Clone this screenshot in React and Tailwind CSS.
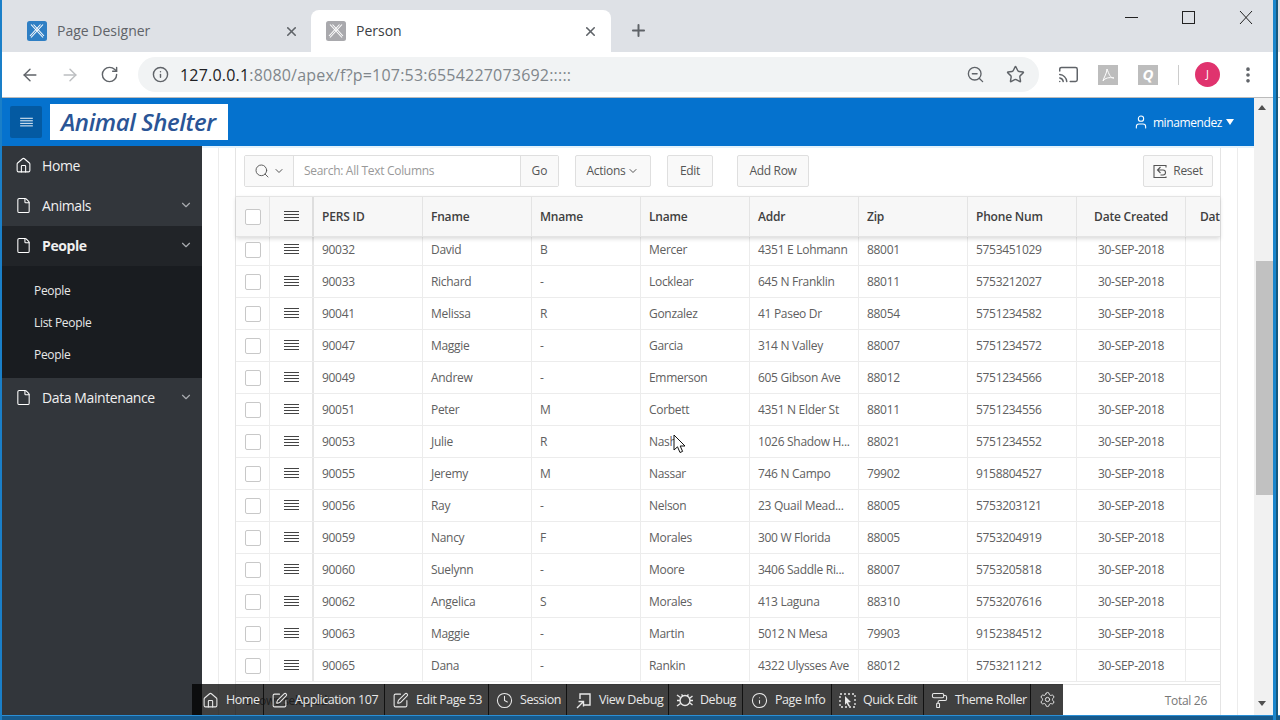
import {
  ArrowLeft, ArrowRight, RotateCw, Info, X, Plus, ZoomOut, Star, Cast, EllipsisVertical,
  House, File, ChevronDown, Search, User, Clock, SquarePen, Settings, PaintRoller,
} from 'lucide-react'

const ROWS = [
  ['90032', 'David', 'B', 'Mercer', '4351 E Lohmann', '88001', '5753451029'],
  ['90033', 'Richard', '-', 'Locklear', '645 N Franklin', '88011', '5753212027'],
  ['90041', 'Melissa', 'R', 'Gonzalez', '41 Paseo Dr', '88054', '5751234582'],
  ['90047', 'Maggie', '-', 'Garcia', '314 N Valley', '88007', '5751234572'],
  ['90049', 'Andrew', '-', 'Emmerson', '605 Gibson Ave', '88012', '5751234566'],
  ['90051', 'Peter', 'M', 'Corbett', '4351 N Elder St', '88011', '5751234556'],
  ['90053', 'Julie', 'R', 'Nash', '1026 Shadow H...', '88021', '5751234552'],
  ['90055', 'Jeremy', 'M', 'Nassar', '746 N Campo', '79902', '9158804527'],
  ['90056', 'Ray', '-', 'Nelson', '23 Quail Mead...', '88005', '5753203121'],
  ['90059', 'Nancy', 'F', 'Morales', '300 W Florida', '88005', '5753204919'],
  ['90060', 'Suelynn', '-', 'Moore', '3406 Saddle Ri...', '88007', '5753205818'],
  ['90062', 'Angelica', 'S', 'Morales', '413 Laguna', '88310', '5753207616'],
  ['90063', 'Maggie', '-', 'Martin', '5012 N Mesa', '79903', '9152384512'],
  ['90065', 'Dana', '-', 'Rankin', '4322 Ulysses Ave', '88012', '5753211212'],
]

const COLUMNS = ['PERS ID', 'Fname', 'Mname', 'Lname', 'Addr', 'Zip', 'Phone Num']
const GRID = 'grid grid-cols-[34px_42px_2px_109px_repeat(7,109px)_34px]'

function ApexLogo({ grey }) {
  return (
    <svg width="20" height="20" viewBox="0 0 20 20" className={`shrink-0 ${grey ? 'text-[#a9a9ad]' : 'text-[#2f7fc4]'}`}>
      <rect width="20" height="20" rx="2.5" fill="currentColor" />
      <path d="M4 3.5l12 13M16 3.5L4 16.5M6.5 3.5l10.5 11.5M13.5 3.5L3 15" stroke="#fff" strokeWidth="1.1" fill="none" />
    </svg>
  )
}

function Tab({ title, grey, active }) {
  return (
    <div className={`flex items-center h-[42px] pl-[15px] ${active ? 'w-[300px] pr-[13px] bg-white rounded-t-[8px]' : 'w-[299px] pr-[12px]'}`}>
      <ApexLogo grey={grey} />
      <span className={`ml-[10px] pb-[2px] flex-1 text-[14px] ${active ? 'text-[#3c4043]' : 'text-[#5f6368]'}`}>{title}</span>
      <X size={15} strokeWidth={2.5} className="text-[#5f6368]" />
    </div>
  )
}

function MenuIcon({ size = 15, className }) {
  return (
    <svg width={size} height={size - 2} viewBox="0 0 15 13" className={className} stroke="currentColor" strokeWidth="1.1">
      <path d="M0 1.5h15M0 4.5h15M0 7.5h15M0 10.5h15" />
    </svg>
  )
}

function SideItem({ icon: Icon, label, chevron, active }) {
  return (
    <div className={`flex items-center h-[40px] pb-[2px] pl-[15px] pr-[9px] ${active ? 'bg-[#212428]' : ''}`}>
      <Icon size={17} strokeWidth={1.5} className="text-white" />
      <span className={`ml-[10px] flex-1 text-[14px] tracking-[-0.4px] text-[#f0f0f0] ${active ? 'font-bold' : ''}`}>{label}</span>
      {chevron && <ChevronDown size={14} className="text-[#a8abaf]" />}
    </div>
  )
}

function ToolButton({ children, className }) {
  return (
    <div className={`flex items-center justify-center h-[32px] border border-[#dfdfdf] rounded-[2px] bg-[#f9f9f9] text-[12px] tracking-[-0.3px] text-[#555] ${className}`}>
      {children}
    </div>
  )
}

function DevItem({ icon: Icon, label, width, pad = 'pl-[7px]' }) {
  return (
    <div className={`flex items-center gap-[7px] h-full pt-[1px] border-r border-[#111] text-[12.5px] tracking-[-0.45px] text-[#e8e8e8] ${pad} ${width}`}>
      <Icon size={17} strokeWidth={1.5} className="text-[#e8e8e8] shrink-0" />
      <span className="whitespace-nowrap">{label}</span>
    </div>
  )
}

function QuickEditIcon() {
  return (
    <svg width="17" height="17" viewBox="0 0 17 17" fill="none" stroke="#e8e8e8" strokeWidth="1.3" strokeDasharray="2 2">
      <rect x="1" y="2" width="15" height="13" />
      <path d="M6 4l6 6-3 .5 2 3.5-1.5.5-2-3.5L6 13z" fill="#e8e8e8" stroke="none" />
    </svg>
  )
}

function ViewDebugIcon() {
  return (
    <svg width="17" height="17" viewBox="0 0 17 17" fill="none" stroke="#e8e8e8" strokeWidth="1.4">
      <path d="M5 7V2h10v11H9" />
      <path d="M2 16l6-6M3.5 9.5H8.5v5" />
    </svg>
  )
}

function DebugIcon() {
  return (
    <svg width="17" height="17" viewBox="0 0 17 17" fill="none" stroke="#e8e8e8" strokeWidth="1.4">
      <circle cx="9" cy="8.5" r="5" />
      <path d="M1 3l3.5 2.5M1 8.5h3M1 14l3.5-2.5M5.5 2.5L7 4M12.5 2.5L11 4M14 8.5h3M14 6l2.5-2M14 11l2.5 2" />
    </svg>
  )
}

function ResetIcon() {
  return (
    <svg width="15" height="15" viewBox="0 0 15 15" fill="none" stroke="#555" strokeWidth="1.1">
      <path d="M13 3.5V1.5H1v12h12v-1" />
      <path d="M7.5 3L4.5 6l3 3M4.5 6H10a2.5 2.5 0 010 5H7.5" />
    </svg>
  )
}

export default function App() {
  return (
    <div className="relative w-[1280px] h-[720px] overflow-hidden bg-white flex flex-col font-['Open_Sans',sans-serif]">
      {/* Browser tabs */}
      <div className="flex items-end h-[52px] pl-[12px] pr-[7px] bg-[#dee1e6] shrink-0">
        <Tab title="Page Designer" />
        <Tab title="Person" grey active />
        <Plus size={19} strokeWidth={2.5} className="ml-[18px] mb-[12px] text-[#5f6368]" />
        <div className="ml-auto self-start flex items-center gap-[44px] pt-[8px] pr-[20px] text-[#222]">
          <svg width="13" height="20" viewBox="0 0 13 20"><path d="M0 9.5h13" stroke="currentColor" /></svg>
          <svg width="13" height="20" viewBox="0 0 13 20"><rect x=".5" y="3.5" width="12" height="12" fill="none" stroke="currentColor" /></svg>
          <svg width="14" height="20" viewBox="0 0 14 20"><path d="M1 3l12 13M13 3L1 16" stroke="currentColor" fill="none" /></svg>
        </div>
      </div>

      {/* Address bar */}
      <div className="flex items-center h-[46px] pl-[2px] pr-[7px] bg-white border-b border-[#bbb] shrink-0">
        <div className="flex items-center w-[136px] pl-[18px] gap-[20px] text-[#5f6368]">
          <ArrowLeft size={20} strokeWidth={1.7} />
          <ArrowRight size={20} strokeWidth={1.7} className="text-[#bcbec1]" />
          <RotateCw size={19} strokeWidth={1.8} />
        </div>
        <div className="flex items-center w-[901px] h-[35px] pl-[14px] pr-[14px] bg-[#f1f3f4] rounded-full">
          <Info size={17} className="text-[#5f6368]" />
          <span className="ml-[11px] flex-1 text-[16px] tracking-[0.2px] text-[#80868b]"><span className="text-[#202124]">127.0.0.1</span>:8080/apex/f?p=107:53:6554227073692:::::</span>
          <ZoomOut size={19} strokeWidth={1.7} className="text-[#5f6368]" />
          <Star size={19} strokeWidth={1.8} className="ml-[21px] text-[#5f6368]" />
        </div>
        <Cast size={21} strokeWidth={1.7} className="ml-[19px] text-[#5f6368]" />
        <div className="ml-[19px] flex items-center justify-center w-[20px] h-[20px] bg-[#bdbdbd]">
          <svg width="14" height="14" viewBox="0 0 14 14"><path d="M6 1c2 5 3 9 7 9-5-1-9 0-11 3 1-4 4-8 4-12z" fill="none" stroke="#fff" /></svg>
        </div>
        <div className="ml-[20px] flex items-center justify-center w-[20px] h-[20px] bg-[#bdbdbd] text-white font-bold italic text-[15px]">Q</div>
        <div className="ml-[20px] w-px h-[20px] bg-[#ccc]" />
        <div className="ml-[16px] flex items-center justify-center w-[25px] h-[25px] rounded-full bg-[#e0336e] text-white text-[11px]">J</div>
        <EllipsisVertical size={20} strokeWidth={2.4} className="ml-[18px] text-[#5f6368]" />
      </div>

      <div className="flex flex-1 min-h-0">
        <div className="flex flex-col flex-1 min-w-0">
          {/* App header */}
          <div className="flex items-center h-[48px] pl-[10px] pr-[20px] bg-[#0572ce] shrink-0">
            <div className="flex items-center justify-center w-[32px] h-[32px] rounded-[2px] bg-[#045aa2]">
              <MenuIcon size={13} className="text-white" />
            </div>
            <div className="flex items-center ml-[8px] w-[178px] h-[36px] pl-[11px] bg-white text-[24px] font-semibold italic tracking-[-0.4px] text-[#2a5596]">Animal Shelter</div>
            <User size={16} strokeWidth={1.6} className="ml-auto text-white" />
            <span className="ml-[4px] mt-[2px] text-[12px] tracking-[-0.4px] text-white">minamendez</span>
            <span className="ml-[4px] w-0 h-0 border-x-[4px] border-x-transparent border-t-[6px] border-t-white" />
          </div>

          <div className="flex flex-1 min-h-0">
            {/* Sidebar */}
            <div className="w-[202px] shrink-0 bg-[#32363b]">
              <SideItem icon={House} label="Home" />
              <SideItem icon={File} label="Animals" chevron />
              <SideItem icon={File} label="People" chevron active />
              <div className="flex flex-col h-[112px] pt-[9px] pl-[34px] bg-[#191c20] text-[12px] tracking-[-0.3px] text-[#e8e8e8]">
                <div className="flex items-center h-[32px]">People</div>
                <div className="flex items-center h-[32px]">List People</div>
                <div className="flex items-center h-[32px]">People</div>
              </div>
              <SideItem icon={File} label="Data Maintenance" chevron />
            </div>

            {/* Content */}
            <div className="flex flex-1 min-w-0 pl-[16px] pr-[16px] bg-white border-t-2 border-[#e3f2fc]">
              <div className="flex-1 min-w-0 pl-[16px] border-x border-[#ececec]">
                <div className="flex flex-col h-full w-[986px] border-x border-[#e4e4e4]">
                  {/* Report toolbar */}
                  <div className="flex items-start h-[48px] pt-[7px] pl-[8px] pr-[7px] shrink-0">
                    <div className="flex items-center h-[32px] w-[315px] border border-[#dfdfdf] rounded-[2px]">
                      <div className="flex items-center justify-center gap-[3px] w-[49px] h-full bg-[#f9f9f9] border-r border-[#dfdfdf]">
                        <Search size={16} strokeWidth={1.4} className="text-[#555]" />
                        <ChevronDown size={12} className="text-[#555]" />
                      </div>
                      <span className="flex-1 pl-[10px] text-[12px] tracking-[-0.3px] text-[#999]">Search: All Text Columns</span>
                      <div className="flex items-center justify-center w-[38px] h-full bg-[#f9f9f9] border-l border-[#dfdfdf] text-[12px] text-[#555]">Go</div>
                    </div>
                    <ToolButton className="ml-[16px] w-[76px] gap-[2px]">Actions<ChevronDown size={12} /></ToolButton>
                    <ToolButton className="ml-[16px] w-[46px]">Edit</ToolButton>
                    <ToolButton className="ml-[24px] w-[72px]">Add Row</ToolButton>
                    <ToolButton className="ml-auto w-[70px] gap-[5px]"><ResetIcon />Reset</ToolButton>
                  </div>

                  {/* Grid header */}
                  <div className={`${GRID} h-[41px] shrink-0 bg-[#f7f7f7] border-y border-[#e4e4e4] shadow-[0_2px_4px_rgba(0,0,0,0.14)] relative text-[12px] font-semibold tracking-[-0.2px] text-[#404040]`}>
                    <div className="flex items-center justify-center border-r border-[#e4e4e4]"><div className="w-[16px] h-[16px] border border-[#c8c8c8] rounded-[2px] bg-white" /></div>
                    <div className="flex items-center justify-center pl-[1px]"><MenuIcon /></div>
                    <div className="bg-[#dedede]" />
                    {COLUMNS.map((c) => <div key={c} className="flex items-center pl-[8px] border-r border-[#e4e4e4]">{c}</div>)}
                    <div className="flex items-center justify-center text-center border-r border-[#e4e4e4]">Date Created</div>
                    <div className="flex items-center pl-[14px] overflow-hidden whitespace-nowrap">Dat</div>
                  </div>

                  {/* Grid rows */}
                  <div className="flex-1 min-h-0 overflow-hidden -mt-[3px]">
                    {ROWS.map((row) => (
                      <div key={row[0]} className={`${GRID} h-[32px] border-b border-[#ececec] text-[12px] tracking-[-0.3px] text-[#606060]`}>
                        <div className="flex items-center justify-center border-r border-[#ececec]"><div className="w-[16px] h-[16px] border border-[#c8c8c8] rounded-[2px] bg-white" /></div>
                        <div className="flex items-center justify-center text-[#444]"><MenuIcon /></div>
                        <div className="bg-[#e6e6e6]" />
                        {row.map((cell, i) => <div key={i} className="flex items-center pl-[8px] border-r border-[#ececec] whitespace-nowrap overflow-hidden">{cell}</div>)}
                        <div className="flex items-center justify-center border-r border-[#ececec]">30-SEP-2018</div>
                        <div />
                      </div>
                    ))}
                  </div>

                  {/* Grid footer */}
                  <div className="flex items-center justify-between h-[31px] pt-[1px] pl-[9px] pr-[13px] shrink-0 bg-white border-t border-[#e4e4e4] text-[12px] tracking-[-0.3px] text-[#777]">
                    <span>0 rows selected</span>
                    <span>Total 26</span>
                  </div>
                </div>
              </div>
            </div>
          </div>
        </div>

        {/* Page scrollbar */}
        <div className="relative w-[19px] bg-[#f1f1f1] shrink-0">
          <span className="absolute top-[7px] left-[4px] w-0 h-0 border-x-[4px] border-x-transparent border-b-[5px] border-b-[#505050]" />
          <div className="absolute top-[163px] left-[2px] w-[17px] h-[234px] bg-[#c1c1c1]" />
          <span className="absolute bottom-[9px] left-[4px] w-0 h-0 border-x-[4px] border-x-transparent border-t-[5px] border-t-[#505050]" />
        </div>
        <div className="w-[7px] shrink-0" />
      </div>

      {/* Window frame, bottom edge */}
      <div className="h-[5px] shrink-0 bg-[#175a8c] border-t border-[#2a8fd6]" />

      {/* APEX developer toolbar, floats over the page */}
      <div className="absolute left-[192px] bottom-[5px] flex w-[871px] h-[31px] bg-black/75">
        <DevItem icon={House} label="Home" width="w-[72px]" pad="pl-[10px]" />
        <DevItem icon={SquarePen} label="Application 107" width="w-[121px]" />
        <DevItem icon={SquarePen} label="Edit Page 53" width="w-[104px]" pad="pl-[7px]" />
        <DevItem icon={Clock} label="Session" width="w-[78px]" />
        <DevItem icon={ViewDebugIcon} label="View Debug" width="w-[102px]" pad="pl-[8px]" />
        <DevItem icon={DebugIcon} label="Debug" width="w-[74px]" />
        <DevItem icon={Info} label="Page Info" width="w-[89px]" pad="pl-[8px]" />
        <DevItem icon={QuickEditIcon} label="Quick Edit" width="w-[92px]" />
        <DevItem icon={PaintRoller} label="Theme Roller" width="w-[107px]" />
        <div className="flex items-center justify-center flex-1"><Settings size={17} strokeWidth={1.4} className="text-[#e8e8e8]" /></div>
      </div>

      {/* Window frame, sides */}
      <div className="absolute left-0 inset-y-0 w-[2px] bg-[#1a7fc8]" />
      <div className="absolute left-[1273px] inset-y-0 w-[5px] bg-[#1a86cc] border-r-2 border-[#16587f]" />

      {/* Mouse cursor */}
      <svg className="absolute left-[673px] top-[434px]" width="13" height="20" viewBox="0 0 13 20">
        <path d="M1 1v15l3.5-3.2L7 18.5l2.6-1.1-2.4-5.4H12z" fill="#fff" stroke="#111" strokeWidth="1" />
      </svg>
    </div>
  )
}
